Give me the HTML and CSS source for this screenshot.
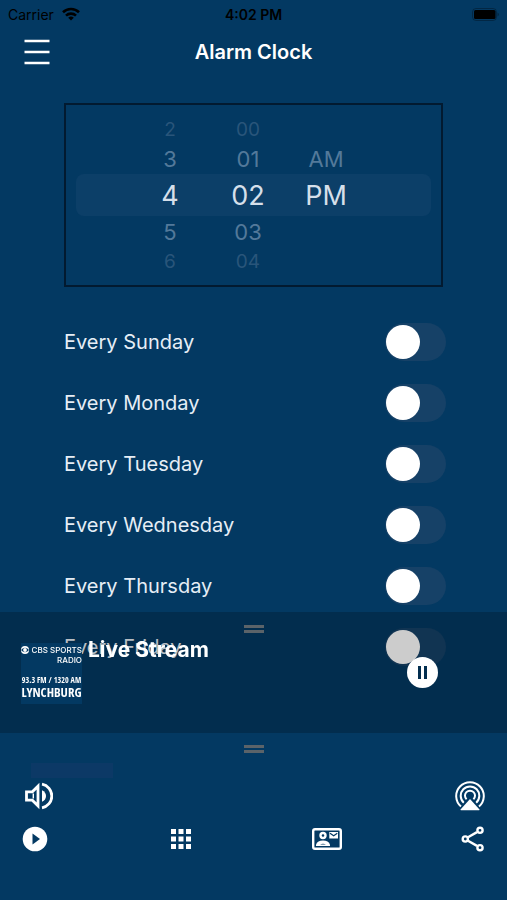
FILE: index.html
```html
<!DOCTYPE html>
<html lang="en">
<head>
<meta charset="utf-8">
<meta name="viewport" content="width=device-width, initial-scale=1">
<title>Alarm Clock</title>
<link rel="stylesheet" href="styles.css">
</head>
<body>
<div class="status">
  <span class="carrier">Carrier
    <svg width="18" height="14" viewBox="0 0 18 14" fill="none" stroke="#000" stroke-width="2.6"><path d="M1 5.2a11.5 11.5 0 0 1 16 0M4 8.6a7.2 7.2 0 0 1 10 0"/><path d="M9 13.6 6.2 10.8a4 4 0 0 1 5.6 0z" fill="#000" stroke="none"/></svg>
  </span>
  <span class="time">4:02 PM</span>
  <span class="battery"><svg width="27" height="13" viewBox="0 0 27 13"><rect x=".5" y=".5" width="24" height="12" rx="3.5" fill="none" stroke="#000" stroke-opacity=".3"/><rect x="2" y="2" width="21.500" height="9" rx="1.500"/><path d="M25.500 4.500v4q1.300-.6 1.300-2t-1.300-2" fill-opacity=".35"/></svg></span>
</div>
<header class="header">
  <button class="menu" type="button" aria-label="Menu"><svg width="26" height="26" viewBox="0 0 26 26" stroke="#fff" stroke-width="2.400"><path d="M.5 2h25M.5 13h25M.5 24h25"/></svg></button>
  <h1>Alarm Clock</h1>
</header>
<main>
  <section class="picker" aria-label="Alarm time">
    <div class="line far"><button type="button">2</button><button type="button">00</button><span></span></div>
    <div class="line near"><button type="button">3</button><button type="button">01</button><button type="button">AM</button></div>
    <div class="line current"><button type="button">4</button><button type="button">02</button><button type="button">PM</button></div>
    <div class="line near"><button type="button">5</button><button type="button">03</button><span></span></div>
    <div class="line far"><button type="button">6</button><button type="button">04</button><span></span></div>
  </section>
  <section class="days">
    <label class="day" for="sun"><span>Every Sunday</span><input class="switch" id="sun" type="checkbox"></label>
    <label class="day" for="mon"><span>Every Monday</span><input class="switch" id="mon" type="checkbox"></label>
    <label class="day" for="tue"><span>Every Tuesday</span><input class="switch" id="tue" type="checkbox"></label>
    <label class="day" for="wed"><span>Every Wednesday</span><input class="switch" id="wed" type="checkbox"></label>
    <label class="day" for="thu"><span>Every Thursday</span><input class="switch" id="thu" type="checkbox"></label>
    <label class="day" for="fri"><span>Every Friday</span><input class="switch" id="fri" type="checkbox"></label>
  </section>
</main>
<div class="dock">
  <section class="player">
    <div class="handle"></div>
    <div class="playing">
      <div class="logo">
        <div class="network"><svg width="8" height="8" viewBox="0 0 8 8"><circle cx="4" cy="4" r="4" fill="#fff"/><path d="M0 4q4-4.400 8 0-4 4.400-8 0" fill="#033962"/><circle cx="4" cy="4" r="1.900" fill="#fff"/></svg><span>CBS SPORTS</span></div>
        <div class="radio">RADIO</div>
        <div class="freq">93.3 FM / 1320 AM</div>
        <div class="city">LYNCHBURG</div>
      </div>
      <h2>Live Stream</h2>
      <button class="pause" type="button" aria-label="Pause"><svg width="31" height="31" viewBox="0 0 31 31"><circle cx="15.500" cy="15.500" r="15.500" fill="#fff"/><path d="M11 9h3v13h-3zM17 9h3v13h-3z" fill="#022e4f"/></svg></button>
    </div>
  </section>
  <section class="panel">
    <div class="handle"></div>
    <div class="level"></div>
    <div class="audio">
      <button type="button" aria-label="Volume"><svg width="28" height="28" viewBox="0 0 28 28"><path d="M1.500 9.800h5.800L13 4.200v19.600l-5.700-5.600H1.500z" fill="none" stroke="#fff" stroke-width="2.800"/><path d="M8.300 11.500v5" stroke="#fff" stroke-width="1.400"/><path d="M17 8.200q4 1.900 4 5.800t-4 5.800z" fill="#fff"/><path d="M17 2.200a12 12 0 0 1 0 23.600" fill="none" stroke="#fff" stroke-width="2.800"/></svg></button>
      <button type="button" aria-label="AirPlay"><svg width="30" height="30" viewBox="0 0 30 30" fill="none" stroke="#fff" stroke-width="2"><path d="M6 25.500a13.800 13.800 0 1 1 18 0M8.800 21.700a9.300 9.300 0 1 1 12.400 0M11.600 18.300a5 5 0 1 1 6.800 0"/><path d="M15 18 24.500 28.500q.3.800-.5.800H6q-.8 0-.5-.8z" fill="#fff" stroke="none"/></svg></button>
    </div>
    <nav class="tabs">
      <a href="#play" aria-label="Play"><svg width="26" height="26" viewBox="0 0 26 26"><circle cx="13" cy="13" r="12.300" fill="#fff"/><path d="M10.500 7.500v11l7.500-5.500z" fill="#033962"/></svg></a>
      <a href="#apps" aria-label="Apps"><svg width="20" height="20" viewBox="0 0 20 20" fill="#fff"><path d="M0 0h5v5H0zM7.500 0h5v5h-5zM15 0h5v5h-5zM0 7.500h5v5H0zM7.500 7.500h5v5h-5zM15 7.500h5v5h-5zM0 15h5v5H0zM7.500 15h5v5h-5zM15 15h5v5h-5z"/></svg></a>
      <a href="#contact" aria-label="Contact"><svg width="30" height="22" viewBox="0 0 30 22"><rect x="1.200" y="1.200" width="27.600" height="19.600" rx="1.800" fill="none" stroke="#fff" stroke-width="2.400"/><circle cx="11" cy="7.500" r="2.500" fill="none" stroke="#fff" stroke-width="2.400"/><path d="M4 18v-1.500q1.500-4 7-4t7 4V18z" fill="#fff"/><path d="M8 16.500q3-1.500 6 0z" fill="#033962"/><path d="M17.300 4H26v6.500h-8.700z" fill="#fff"/><path d="m18 5.200 3.700 2.600 3.600-2.600" fill="none" stroke="#033962" stroke-width="1.200"/></svg></a>
      <a href="#share" aria-label="Share"><svg width="24" height="26" viewBox="0 0 24 26" fill="none" stroke="#fff" stroke-width="2.400"><path d="m7 11.300 9-5.200M7 14.700l9 5.200"/><circle cx="4.300" cy="13" r="2.600"/><circle cx="19" cy="4.300" r="2.600"/><circle cx="19" cy="21.700" r="2.600"/></svg></a>
    </nav>
  </section>
</div>
</body>
</html>
```
FILE: styles.css
```css
* { box-sizing: border-box; }

body {
  margin: 0;
  min-height: 100vh;
  background: #033962;
  color: #fff;
  font-family: Inter, "Liberation Sans", sans-serif;
}

button {
  padding: 0;
  border: 0;
  background: none;
  color: inherit;
  font: inherit;
}

svg { display: block; }

.status {
  display: grid;
  grid-template-columns: 1fr auto 1fr;
  align-items: center;
  height: 28px;
  padding: 0 8px;
  color: #000;
  font-size: 14px;
}

.carrier { display: flex; align-items: center; gap: 8px; }
.time { font-weight: 600; }
.battery { justify-self: end; }

.header {
  display: grid;
  grid-template-columns: 1fr auto 1fr;
  align-items: center;
  height: 48px;
  padding: 0 24px;
}

.menu { justify-self: start; }

h1, h2 { margin: 0; font-size: 20px; font-weight: 600; }

main { padding: 27px 64px 0; }

.picker {
  height: 184px;
  padding: 10px;
  border: 2px solid #021a30;
}

.line {
  display: grid;
  grid-template-columns: repeat(3, 78px);
  justify-content: center;
  align-items: center;
  padding-right: 11px;
  border-radius: 8px;
}

.far { height: 28px; color: #29557a; font-size: 19px; }
.near { height: 31px; color: #53799a; font-size: 22px; }
.current { height: 42px; background: #0c3f68; color: #d5dfea; font-size: 27px; }

.days { padding-top: 24px; margin-right: -3px; }

.day {
  display: flex;
  align-items: center;
  justify-content: space-between;
  height: 61px;
  color: #e6eef6;
  font-size: 20px;
}

.switch {
  appearance: none;
  width: 61px;
  height: 38px;
  margin: 0;
  padding: 2px 1px;
  border-radius: 19px;
  background: #164167;
}

.switch::before {
  content: "";
  display: block;
  width: 34px;
  height: 34px;
  border-radius: 50%;
  background: #fff;
}

.switch:checked::before { margin-left: auto; }

.dock { position: fixed; right: 0; bottom: 0; left: 0; }

.player {
  height: 121px;
  padding-top: 13px;
  background: rgba(0, 0, 0, 0.2);
}

.handle {
  width: 20px;
  height: 8px;
  margin: 0 auto;
  border: solid #5b6369;
  border-width: 3px 0;
}

.playing {
  display: flex;
  align-items: flex-start;
  gap: 6px;
  padding: 10px 69px 0 21px;
}

.logo {
  width: 61px;
  height: 61px;
  background: #033962;
  font-family: "Open Sans Condensed", "Open Sans", sans-serif;
  white-space: nowrap;
  text-align: right;
}

.network {
  display: flex;
  align-items: center;
  justify-content: space-between;
  height: 13px;
}

.network, .radio { font-family: Inter, sans-serif; font-size: 8px; font-weight: 500; }
.radio { height: 19px; line-height: 9px; }
.freq { font-size: 8px; font-weight: 300; line-height: 9px; text-align: center; }
.city { font-size: 13px; font-weight: 300; line-height: 16px; text-align: center; }

.playing h2 { flex: 1; line-height: 14px; font-size: 21px; font-weight: 700; }

.pause { margin-top: 14px; }

.panel {
  height: 167px;
  padding-top: 12px;
  background: #033962;
}

.level {
  width: 82px;
  height: 15px;
  margin: 10px 0 0 31px;
  background: #0c3966;
}

.audio {
  display: flex;
  align-items: center;
  justify-content: space-between;
  height: 30px;
  margin-top: 3px;
  padding: 0 22px 0 25px;
}

.tabs {
  display: flex;
  align-items: center;
  justify-content: space-between;
  height: 26px;
  margin-top: 15px;
  padding: 0 19px 0 20px;
}

.tabs a { display: flex; justify-content: center; width: 30px; }
```
